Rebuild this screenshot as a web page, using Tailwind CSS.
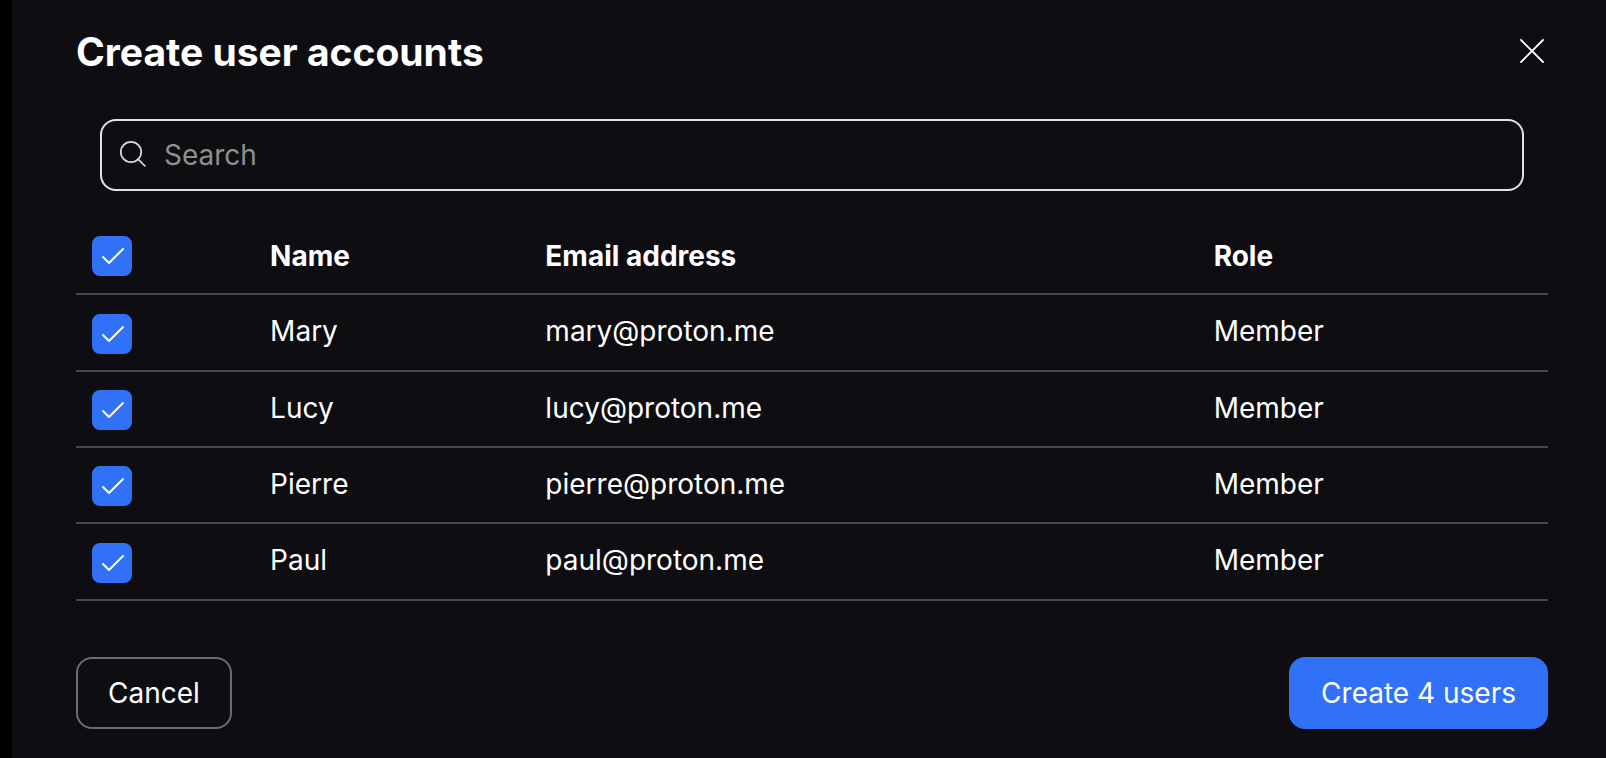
<!DOCTYPE html>
<html lang="en">
<head>
    <meta charset="UTF-8">
    <meta name="viewport" content="width=device-width, initial-scale=1.0">
    <title>Create user accounts</title>

    <script src="https://cdn.jsdelivr.net/npm/@tailwindcss/browser@4"></script>
</head>
<body class="bg-black pl-3 font-['Inter',sans-serif] text-[28px] leading-10 text-white">
    <main class="min-h-screen bg-[#0e0d12] pl-16 pr-[58px] pt-6">
        <header class="flex items-center justify-between">
            <h1 class="text-[39px] font-bold leading-[56px]">Create user accounts</h1>
            <button type="button" aria-label="Close" class="flex h-8 w-8 items-center justify-center">
                <svg class="h-8 w-8" viewBox="0 0 32 32" fill="none" stroke="currentColor" stroke-width="1.8" stroke-linecap="round">
                    <path d="M5 4 27 26M27 4 5 26"/>
                </svg>
            </button>
        </header>

        <label class="mx-6 mt-[39px] flex h-[72px] items-center gap-3.5 rounded-2xl border-2 border-[#e5e3de] px-4">
            <svg class="h-8 w-8 shrink-0 text-[#dcdbd8]" viewBox="0 0 32 32" fill="none" stroke="currentColor" stroke-width="1.7" stroke-linecap="round">
                <circle cx="13" cy="13" r="10.2"/>
                <path d="m20.3 20.3 6.7 6.7"/>
            </svg>
            <input type="search" placeholder="Search" aria-label="Search" class="w-full bg-transparent outline-none placeholder:text-[#8f8f90]">
        </label>

        <table class="mt-[29px] w-full table-fixed border-collapse text-left">
            <thead>
                <tr class="h-[74px] border-b-2 border-[#4a4658]">
                    <th class="w-[12.1%] px-4 pb-0.5">
                        <label class="relative block h-10 w-10">
                            <input type="checkbox" checked aria-label="Select all" class="peer block h-10 w-10 appearance-none rounded-lg border-2 border-[#4a4658] checked:border-[#3071f7] checked:bg-[#3071f7]">
                            <svg class="pointer-events-none absolute inset-0 hidden peer-checked:block" viewBox="0 0 40 40" fill="none" stroke="currentColor" stroke-width="2" stroke-linecap="round" stroke-linejoin="round"><path d="m11 21 6 6L31 13"/></svg>
                        </label>
                    </th>
                    <th class="w-[18.7%] px-4 pb-0.5 font-bold">Name</th>
                    <th class="w-[45.4%] px-4 pb-0.5 font-bold">Email address</th>
                    <th class="px-4 pb-0.5 font-bold">Role</th>
                </tr>
            </thead>
            <tbody>
                <tr class="h-[77px] border-b-2 border-[#4a4658]">
                    <td class="px-4 pt-0.5">
                        <label class="relative block h-10 w-10">
                            <input type="checkbox" checked aria-label="Select Mary" class="peer block h-10 w-10 appearance-none rounded-lg border-2 border-[#4a4658] checked:border-[#3071f7] checked:bg-[#3071f7]">
                            <svg class="pointer-events-none absolute inset-0 hidden peer-checked:block" viewBox="0 0 40 40" fill="none" stroke="currentColor" stroke-width="2" stroke-linecap="round" stroke-linejoin="round"><path d="m11 21 6 6L31 13"/></svg>
                        </label>
                    </td>
                    <td class="px-4 pb-[3px]">Mary</td>
                    <td class="px-4 pb-[3px]">mary@proton.me</td>
                    <td class="px-4 pb-[3px]">Member</td>
                </tr>
                <tr class="h-[76px] border-b-2 border-[#4a4658]">
                    <td class="px-4 pt-0.5">
                        <label class="relative block h-10 w-10">
                            <input type="checkbox" checked aria-label="Select Lucy" class="peer block h-10 w-10 appearance-none rounded-lg border-2 border-[#4a4658] checked:border-[#3071f7] checked:bg-[#3071f7]">
                            <svg class="pointer-events-none absolute inset-0 hidden peer-checked:block" viewBox="0 0 40 40" fill="none" stroke="currentColor" stroke-width="2" stroke-linecap="round" stroke-linejoin="round"><path d="m11 21 6 6L31 13"/></svg>
                        </label>
                    </td>
                    <td class="px-4 pb-[3px]">Lucy</td>
                    <td class="px-4 pb-[3px]">lucy@proton.me</td>
                    <td class="px-4 pb-[3px]">Member</td>
                </tr>
                <tr class="h-[76px] border-b-2 border-[#4a4658]">
                    <td class="px-4 pt-0.5">
                        <label class="relative block h-10 w-10">
                            <input type="checkbox" checked aria-label="Select Pierre" class="peer block h-10 w-10 appearance-none rounded-lg border-2 border-[#4a4658] checked:border-[#3071f7] checked:bg-[#3071f7]">
                            <svg class="pointer-events-none absolute inset-0 hidden peer-checked:block" viewBox="0 0 40 40" fill="none" stroke="currentColor" stroke-width="2" stroke-linecap="round" stroke-linejoin="round"><path d="m11 21 6 6L31 13"/></svg>
                        </label>
                    </td>
                    <td class="px-4 pb-[3px]">Pierre</td>
                    <td class="px-4 pb-[3px]">pierre@proton.me</td>
                    <td class="px-4 pb-[3px]">Member</td>
                </tr>
                <tr class="h-[77px] border-b-2 border-[#4a4658]">
                    <td class="px-4 pt-0.5">
                        <label class="relative block h-10 w-10">
                            <input type="checkbox" checked aria-label="Select Paul" class="peer block h-10 w-10 appearance-none rounded-lg border-2 border-[#4a4658] checked:border-[#3071f7] checked:bg-[#3071f7]">
                            <svg class="pointer-events-none absolute inset-0 hidden peer-checked:block" viewBox="0 0 40 40" fill="none" stroke="currentColor" stroke-width="2" stroke-linecap="round" stroke-linejoin="round"><path d="m11 21 6 6L31 13"/></svg>
                        </label>
                    </td>
                    <td class="px-4 pb-[3px]">Paul</td>
                    <td class="px-4 pb-[3px]">paul@proton.me</td>
                    <td class="px-4 pb-[3px]">Member</td>
                </tr>
            </tbody>
        </table>

        <footer class="mt-14 flex items-center justify-between">
            <button type="button" class="h-[72px] rounded-2xl border-2 border-[#6b6b75] px-[30px]">Cancel</button>
            <button type="submit" class="h-[72px] rounded-2xl bg-[#3071f7] px-8">Create 4 users</button>
        </footer>
    </main>
</body>
</html>
